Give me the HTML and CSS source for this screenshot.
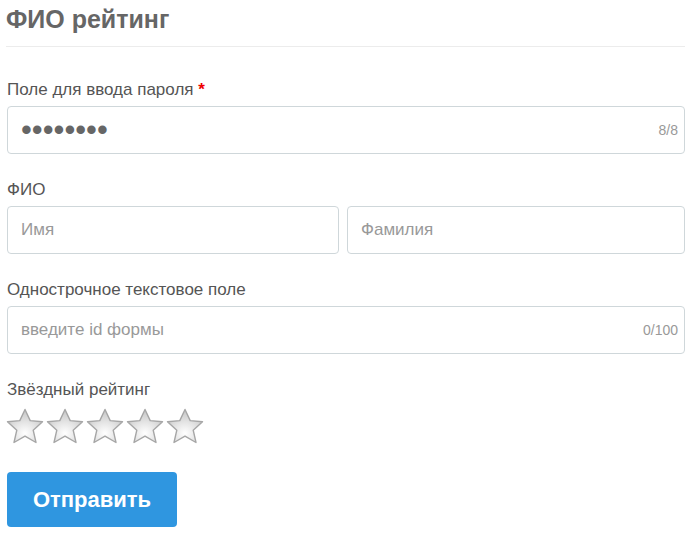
FILE: index.html
```html
<!DOCTYPE html>
<html lang="ru">
<head>
<meta charset="utf-8">
<link rel="stylesheet" href="styles.css">
</head>
<body>
<div class="page">
  <h1 class="title">ФИО рейтинг</h1>

  <div class="field">
    <label class="label">Поле для ввода пароля <span class="req">*</span></label>
    <div class="control">
      <input class="input pass" type="password" value="12345678">
      <span class="counter">8/8</span>
    </div>
  </div>

  <div class="field">
    <label class="label">ФИО</label>
    <div class="row">
      <input class="input" type="text" placeholder="Имя">
      <input class="input" type="text" placeholder="Фамилия">
    </div>
  </div>

  <div class="field">
    <label class="label">Однострочное текстовое поле</label>
    <div class="control">
      <input class="input" type="text" placeholder="введите id формы">
      <span class="counter">0/100</span>
    </div>
  </div>

  <div class="field">
    <label class="label">Звёздный рейтинг</label>
    <div class="stars">
      <svg class="star" viewBox="0 0 40 40"><defs><radialGradient id="g" cx="50%" cy="72%" r="62%"><stop offset="0" stop-color="#ffffff"/><stop offset="0.55" stop-color="#e4e4e4"/><stop offset="1" stop-color="#cccccc"/></radialGradient></defs><path d="M20 3.5 L25.2 14.6 L37.5 15.8 L28.2 24.2 L31 36.5 L20 30.2 L9 36.5 L11.8 24.2 L2.5 15.8 L14.8 14.6 Z" fill="url(#g)" stroke="#a6a6a6" stroke-width="1.4" stroke-linejoin="round"/></svg>
      <svg class="star" viewBox="0 0 40 40"><path d="M20 3.5 L25.2 14.6 L37.5 15.8 L28.2 24.2 L31 36.5 L20 30.2 L9 36.5 L11.8 24.2 L2.5 15.8 L14.8 14.6 Z" fill="url(#g)" stroke="#a6a6a6" stroke-width="1.4" stroke-linejoin="round"/></svg>
      <svg class="star" viewBox="0 0 40 40"><path d="M20 3.5 L25.2 14.6 L37.5 15.8 L28.2 24.2 L31 36.5 L20 30.2 L9 36.5 L11.8 24.2 L2.5 15.8 L14.8 14.6 Z" fill="url(#g)" stroke="#a6a6a6" stroke-width="1.4" stroke-linejoin="round"/></svg>
      <svg class="star" viewBox="0 0 40 40"><path d="M20 3.5 L25.2 14.6 L37.5 15.8 L28.2 24.2 L31 36.5 L20 30.2 L9 36.5 L11.8 24.2 L2.5 15.8 L14.8 14.6 Z" fill="url(#g)" stroke="#a6a6a6" stroke-width="1.4" stroke-linejoin="round"/></svg>
      <svg class="star" viewBox="0 0 40 40"><path d="M20 3.5 L25.2 14.6 L37.5 15.8 L28.2 24.2 L31 36.5 L20 30.2 L9 36.5 L11.8 24.2 L2.5 15.8 L14.8 14.6 Z" fill="url(#g)" stroke="#a6a6a6" stroke-width="1.4" stroke-linejoin="round"/></svg>
    </div>
  </div>

  <button class="submit" type="button">Отправить</button>
</div>
</body>
</html>
```

FILE: styles.css
```css
* { box-sizing: border-box; }
body {
  margin: 0;
  background: #fff;
  font-family: "Liberation Sans", Arial, sans-serif;
  color: #555;
}
.page {
  padding: 0 4px 0 7px;
}
.title {
  margin: 0 0 0 -1px;
  padding-top: 4px;
  height: 47px;
  font-size: 25px;
  line-height: 30px;
  font-weight: bold;
  color: #666;
  border-bottom: 1px solid #ececec;
}
.field {
  margin-top: 33px;
}
.field + .field {
  margin-top: 26px;
}
.label {
  display: block;
  font-size: 17px;
  line-height: 20px;
  color: #555;
  margin-bottom: 6px;
}
.req { color: #e00; font-weight: bold; }
.control { position: relative; }
.input {
  display: block;
  width: 100%;
  height: 48px;
  border: 1px solid #cfd7da;
  border-radius: 4px;
  padding: 0 13px;
  font-family: "Liberation Sans", Arial, sans-serif;
  font-size: 17px;
  color: #555;
  background: #fff;
  outline: none;
}
.input::placeholder { color: #999; }
.pass {
  font-size: 31px;
  letter-spacing: 0;
  color: #666;
}
.counter {
  position: absolute;
  right: 7px;
  top: 50%;
  transform: translateY(-50%);
  font-size: 14px;
  color: #999;
}
.row {
  display: flex;
  gap: 8px;
}
.row .input { flex: 1; }
.row .input:first-child { flex: 0 0 332px; }
.stars {
  display: flex;
  margin-left: -2px;
  margin-top: 3px;
}
.star {
  width: 40px;
  height: 40px;
  display: block;
}
.submit {
  margin-top: 26px;
  width: 170px;
  height: 55px;
  border: none;
  border-radius: 4px;
  background: #2f96e0;
  color: #fff;
  font-family: "Liberation Sans", Arial, sans-serif;
  font-size: 22px;
  font-weight: bold;
  cursor: pointer;
}
```
